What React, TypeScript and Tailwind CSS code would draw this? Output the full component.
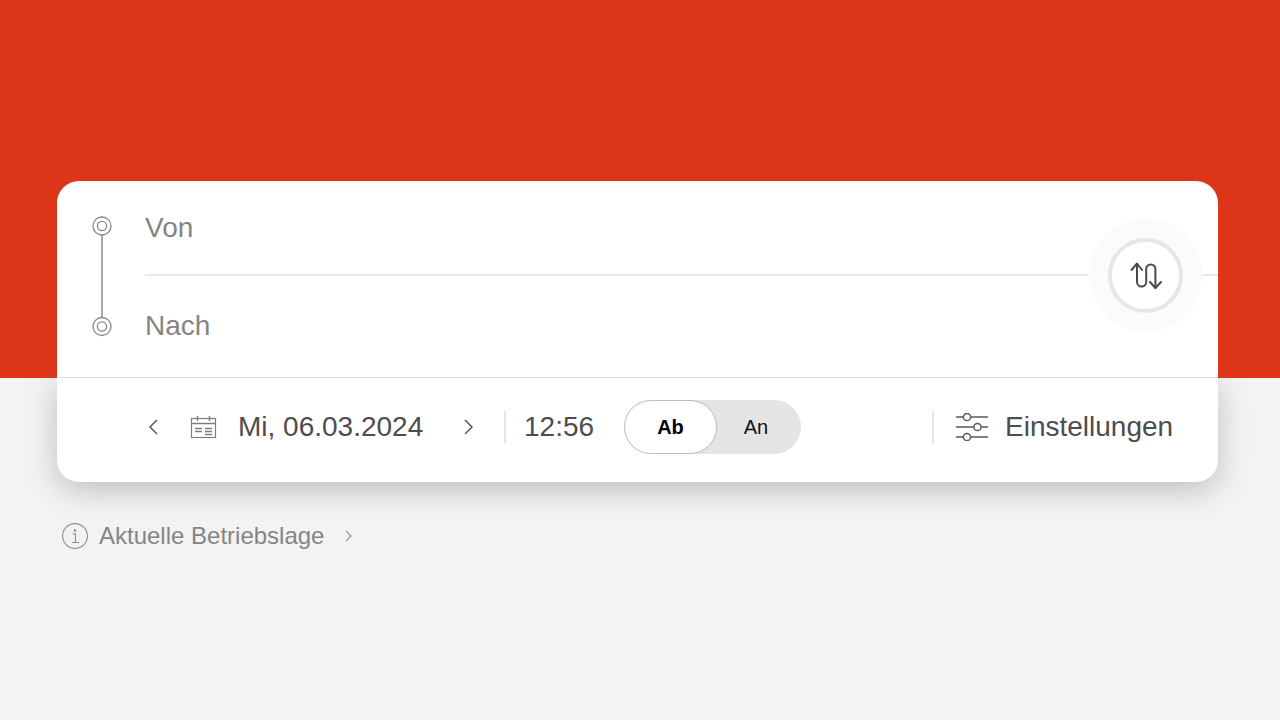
export default function App() {
  const font = { } as const;
  void font;
  return (
    <div className="w-[1280px] h-[720px] overflow-hidden bg-[#f3f3f3] font-['Liberation_Sans',Arial,sans-serif]">
      <div className="relative z-10 h-[378px] bg-[#dd3518] pt-[181px] px-[57px]">
        <div className="relative h-[197px] w-[1161px] overflow-hidden rounded-t-[22px] bg-white border-b border-[#e2e2e2] flex">
          <div className="pl-[35px] pt-[35px] w-[88px] shrink-0">
            <svg width="20" height="121" viewBox="0 0 20 121" fill="none" stroke="#858585">
              <circle cx="10" cy="10" r="9" strokeWidth="1.3" />
              <circle cx="10" cy="10" r="4.6" strokeWidth="1.3" />
              <line x1="10" y1="19" x2="10" y2="101" strokeWidth="1.4" />
              <circle cx="10" cy="110.5" r="9" strokeWidth="1.3" />
              <circle cx="10" cy="110.5" r="4.6" strokeWidth="1.3" />
            </svg>
          </div>
          <div className="flex-1 flex flex-col">
            <div className="h-[93px] flex items-center pt-[-1px] text-[28px] leading-none text-[#848484]">Von</div>
            <div className="h-[2px] bg-[#e9e9e9]" />
            <div className="flex-1 flex items-center pb-[2px] text-[28px] leading-none text-[#848484]">Nach</div>
          </div>
          <button className="absolute left-[1051px] top-[57px] w-[75px] h-[75px] rounded-full bg-white border-[4px] border-[#e6e6e6] shadow-[0_0_0_19px_#fbfbfb] flex items-center justify-center">
            <svg width="32" height="28" viewBox="0 0 32 28" fill="none" stroke="#4a4a4a" strokeWidth="2" strokeLinecap="round" strokeLinejoin="round">
              <path d="M1.5 8 L7 1.5 L12 8" />
              <path d="M7 2 V20 a4.6 4.6 0 0 0 9.2 0 V7 a4.6 4.6 0 0 1 9.2 0 V26" />
              <path d="M20 20 L25.4 26 L31 20" />
            </svg>
          </button>
        </div>
      </div>
      <div className="px-[57px]">
        <div className="h-[104px] w-[1161px] rounded-b-[22px] bg-white shadow-[0_8px_32px_rgba(0,0,0,0.22)] flex items-center pb-[7px] pl-[88px]">
          <svg width="14" height="18" viewBox="0 0 14 18" fill="none" stroke="#5a5a5a" strokeWidth="1.5" className="ml-[2px]">
            <path d="M10 2 L3 9 L10 16" />
          </svg>
          <svg width="28" height="24" viewBox="0 0 28 24" fill="none" stroke="#7d7d7d" strokeWidth="1.2" className="ml-[29px]">
            <rect x="1.5" y="3.5" width="24" height="19" />
            <path d="M1.5 8.5 H25.5 M7.5 1 V6 M19.5 1 V6" strokeWidth="1.4" />
            <path d="M5 13.5 H12 M15 13.5 H22 M5 16.5 H12 M15 16.5 H22 M15 19.5 H22" strokeWidth="1.4" />
          </svg>
          <span className="ml-[20px] w-[185px] text-[28px] leading-none text-[#4d4d4d] whitespace-nowrap">Mi, 06.03.2024</span>
          <svg width="14" height="18" viewBox="0 0 14 18" fill="none" stroke="#5a5a5a" strokeWidth="1.5" className="ml-[38px]">
            <path d="M4 2 L11 9 L4 16" />
          </svg>
          <div className="ml-[29px] w-[2px] h-[32px] bg-[#e5e5e5]" />
          <span className="ml-[18px] w-[69px] text-[28px] leading-none text-[#4d4d4d]">12:56</span>
          <div className="ml-[31px] relative h-[54px] w-[177px] rounded-full bg-[#e4e4e4] flex items-center">
            <div className="w-[93px] h-[54px] rounded-full bg-white border border-[#bdbdbd] flex items-center justify-center text-[20px] font-bold text-black">Ab</div>
            <div className="w-[78px] text-center text-[20px] text-[#111]">An</div>
          </div>
          <div className="ml-[131px] w-[2px] h-[32px] bg-[#e5e5e5]" />
          <svg width="32" height="28" viewBox="0 0 32 28" fill="none" stroke="#5a5a5a" strokeWidth="1.5" className="ml-[22px]">
            <circle cx="11" cy="4" r="3.6" />
            <circle cx="21.5" cy="14" r="3.6" />
            <circle cx="11" cy="24" r="3.6" />
            <path d="M0 4 H7.4 M14.6 4 H32 M0 14 H17.9 M25.1 14 H32 M0 24 H7.4 M14.6 24 H32" />
          </svg>
          <span className="ml-[17px] text-[28px] leading-none text-[#4d4d4d] whitespace-nowrap">Einstellungen</span>
        </div>
        <div className="flex items-center mt-[40px] ml-[5px] h-[28px]">
          <svg width="26" height="26" viewBox="0 0 26 26" fill="none" stroke="#8c8c8c" strokeWidth="1.1">
            <circle cx="13" cy="13" r="12.4" />
            <circle cx="13" cy="7.5" r="0.8" fill="#8c8c8c" />
            <path d="M10.5 11 H13.5 V19 M10 19.5 H17" />
          </svg>
          <span className="ml-[11px] text-[24px] leading-none text-[#858585] whitespace-nowrap">Aktuelle Betriebslage</span>
          <svg width="10" height="14" viewBox="0 0 10 14" fill="none" stroke="#9a9a9a" strokeWidth="1.2" className="ml-[20px]">
            <path d="M2 2 L7 7 L2 12" />
          </svg>
        </div>
      </div>
    </div>
  );
}
